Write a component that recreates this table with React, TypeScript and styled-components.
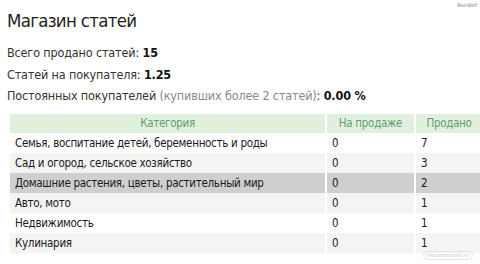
import React from "react";
import styled, { createGlobalStyle } from "styled-components";

const GlobalStyle = createGlobalStyle`
  html, body {
    margin: 0;
    padding: 0;
    background: #fff;
  }
  body {
    font-family: "DejaVu Sans Condensed", "DejaVu Sans", Verdana, sans-serif;
    font-stretch: condensed;
    color: #222;
    width: 480px;
    height: 264px;
    overflow: hidden;
  }
`;

const Page = styled.div`
  position: relative;
  width: 480px;
  height: 264px;
  padding: 9px 0 0 7px;
  box-sizing: border-box;
`;

const Title = styled.h1`
  margin: 0 0 9px;
  font-size: 18.5px;
  font-weight: normal;
  line-height: 24px;
  letter-spacing: -0.7px;
  color: #1e1e1e;
`;

const StatLine = styled.div`
  font-size: 12.5px;
  line-height: 21.5px;
  letter-spacing: -0.15px;
  color: #333;
`;

const Muted = styled.span`
  color: #8a8a8a;
`;

const Value = styled.b`
  color: #111;
`;

const Table = styled.table`
  margin: 7px 0 0 3px;
  width: 472px;
  border-collapse: collapse;
  table-layout: fixed;
  font-size: 11.5px;
  letter-spacing: -0.3px;
`;

const Th = styled.th<{ $w?: number }>`
  width: ${(p) => (p.$w ? `${p.$w}px` : "auto")};
  height: 19px;
  padding: 0;
  background: #e1f0dc;
  color: #5f9f6d;
  font-weight: normal;
  text-align: center;
  border-left: 2px solid #fff;
  &:first-child {
    border-left: none;
  }
`;

const Row = styled.tr<{ $tone: "white" | "light" | "dark" }>`
  background: ${(p) =>
    p.$tone === "dark" ? "#cfcfcf" : p.$tone === "light" ? "#f4f4f4" : "#fff"};
`;

const Td = styled.td`
  height: 20px;
  padding: 0 0 0 5px;
  color: #1a1a1a;
  white-space: nowrap;
  overflow: hidden;
  border-left: 2px solid #fff;
  &:first-child {
    border-left: none;
  }
`;

const Mark = styled.div`
  position: absolute;
  top: 2px;
  right: 3px;
  font-size: 5px;
  color: #777;
`;

const Stamp = styled.div`
  position: absolute;
  right: 7px;
  bottom: 4px;
  height: 7px;
  padding: 0 3px;
  border: 1px solid #e2e2e2;
  border-radius: 5px;
  font-size: 5.5px;
  line-height: 7px;
  font-weight: bold;
  color: #dcdcdc;
`;

const rows: { name: string; onSale: number; sold: number; tone: "white" | "light" | "dark" }[] = [
  { name: "Семья, воспитание детей, беременность и роды", onSale: 0, sold: 7, tone: "white" },
  { name: "Сад и огород, сельское хозяйство", onSale: 0, sold: 3, tone: "light" },
  { name: "Домашние растения, цветы, растительный мир", onSale: 0, sold: 2, tone: "dark" },
  { name: "Авто, мото", onSale: 0, sold: 1, tone: "light" },
  { name: "Недвижимость", onSale: 0, sold: 1, tone: "white" },
  { name: "Кулинария", onSale: 0, sold: 1, tone: "light" },
];

const App = () => {
  return (
    <Page>
      <GlobalStyle />
      <Mark>Red-Wolf</Mark>
      <Title>Магазин статей</Title>
      <StatLine>
        Всего продано статей: <Value>15</Value>
      </StatLine>
      <StatLine>
        Статей на покупателя: <Value>1.25</Value>
      </StatLine>
      <StatLine>
        Постоянных покупателей <Muted>(купивших более 2 статей)</Muted>: <Value>0.00 %</Value>
      </StatLine>
      <Table>
        <thead>
          <tr>
            <Th>Категория</Th>
            <Th $w={87}>На продаже</Th>
            <Th $w={66}>Продано</Th>
          </tr>
        </thead>
        <tbody>
          {rows.map((r, i) => (
            <Row key={i} $tone={r.tone}>
              <Td>{r.name}</Td>
              <Td>{r.onSale}</Td>
              <Td>{r.sold}</Td>
            </Row>
          ))}
        </tbody>
      </Table>
      <Stamp>irecommend.ru</Stamp>
    </Page>
  );
};

export default App;
